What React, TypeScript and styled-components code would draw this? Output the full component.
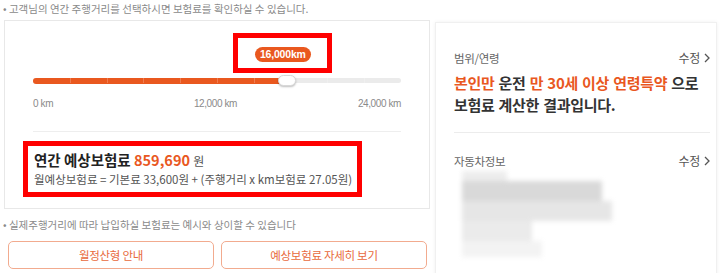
import React from "react";
import styled, { createGlobalStyle } from "styled-components";

const ORANGE = "#e9581f";
const FONT = `"Noto Sans CJK KR", "Noto Sans", sans-serif`;

const Global = createGlobalStyle`
  html, body { margin: 0; padding: 0; background: #fff; }
  body { font-family: ${FONT}; color: #333; }
  * { box-sizing: border-box; }
`;

const Page = styled.div`
  width: 720px;
  height: 273px;
  overflow: hidden;
  display: flex;
  align-items: flex-start;
`;

const LeftCol = styled.div`
  width: 432px;
  flex: none;
  display: flex;
  flex-direction: column;
`;

const Note = styled.p<{ $top?: number }>`
  margin: 0;
  padding: ${(p) => p.$top ?? 0}px 0 0 3px;
  font-size: 10.5px;
  line-height: 14px;
  color: #8a8a8a;
  white-space: nowrap;
  letter-spacing: 0;
`;

const Card = styled.div`
  margin: 4px 0 0 4px;
  width: 426px;
  height: 189px;
  border: 1px solid #e8e8e8;
  padding: 0 28px 0 28px;
  display: flex;
  flex-direction: column;
`;

const SliderBox = styled.div`
  position: relative;
  height: 110px;
  padding-top: 57px;
`;

const Track = styled.div`
  position: relative;
  height: 5px;
  border-radius: 3px;
  background: #ebebeb;
`;

const Fill = styled.div`
  position: absolute;
  left: 0;
  top: -0.5px;
  height: 6px;
  border-radius: 3px;
  background: ${ORANGE};
`;

const Tick = styled.span`
  position: absolute;
  top: 0;
  width: 1px;
  height: 5px;
  background: rgba(255, 255, 255, 0.22);
`;

const Thumb = styled.div`
  position: absolute;
  top: -3px;
  width: 18px;
  height: 11px;
  border-radius: 6px;
  background: #fff;
  border: 1px solid #d8d8d8;
  box-shadow: 0 1px 2px rgba(0, 0, 0, 0.25);
`;

const Annot = styled.div`
  position: absolute;
  top: 12px;
  width: 99px;
  height: 40px;
  border: 5px solid #f00;
  display: flex;
  align-items: center;
  justify-content: center;
  padding-top: 3px;
`;

const Badge = styled.span`
  background: ${ORANGE};
  color: #fff;
  font-family: "Liberation Sans", Arial, sans-serif;
  font-weight: 700;
  font-size: 10.5px;
  line-height: 15px;
  padding: 0 5px;
  border-radius: 8px;
  letter-spacing: -0.2px;
`;

const Labels = styled.div`
  display: flex;
  justify-content: space-between;
  margin-top: 15px;
  font-family: "Liberation Sans", Arial, sans-serif;
  font-size: 10px;
  line-height: 12px;
  color: #8a8a8a;
  letter-spacing: -0.4px;
`;

const Label = styled.span<{ $shift?: number }>`
  margin-left: ${(p) => p.$shift ?? 0}px;
`;

const Divider = styled.div`
  height: 1px;
  background: #eeeeee;
`;

const ResultBox = styled.div`
  margin: 9px 0 0 -10px;
  width: 339px;
  height: 56px;
  border: 5px solid #f00;
  padding: 4px 0 0 6px;
  display: flex;
  flex-direction: column;
`;

const Annual = styled.div`
  font-size: 14.5px;
  line-height: 20px;
  font-weight: 700;
  color: #222;
  letter-spacing: 0;
  white-space: nowrap;
`;

const Amount = styled.span`
  color: ${ORANGE};
`;

const Won = styled.span`
  font-weight: 400;
  font-size: 12px;
  color: #555;
`;

const Formula = styled.div`
  font-size: 11.5px;
  line-height: 16px;
  color: #555;
  letter-spacing: 0;
  white-space: nowrap;
`;

const BtnRow = styled.div`
  display: flex;
  gap: 7px;
  margin: 9px 0 0 8px;
`;

const Btn = styled.button`
  width: 206px;
  height: 28px;
  border: 1px solid #f2ab8f;
  border-radius: 5px;
  background: #fff;
  color: #e86a3c;
  font-family: ${FONT};
  font-size: 11.5px;
  letter-spacing: -0.3px;
  padding: 0;
`;

const RightPanel = styled.div`
  margin: 22px 0 0 3px;
  width: 282px;
  height: 260px;
  border: 1px solid #f0f0f0;
  box-shadow: 0 0 4px rgba(0, 0, 0, 0.06);
  padding: 27px 6px 0 18px;
  display: flex;
  flex-direction: column;
`;

const Section = styled.div`
  display: flex;
  flex-direction: column;
`;

const Head = styled.div`
  display: flex;
  justify-content: space-between;
  align-items: center;
  font-size: 11.5px;
  line-height: 16px;
  color: #666;
  letter-spacing: -0.3px;
`;

const Edit = styled.span`
  display: flex;
  align-items: center;
  gap: 4px;
  color: #555;
  font-size: 12px;
`;

const Summary = styled.div`
  margin-top: 6px;
  font-size: 15px;
  line-height: 22px;
  font-weight: 700;
  color: #333;
  letter-spacing: -0.3px;
  word-spacing: 1px;
`;

const Hl = styled.span`
  color: ${ORANGE};
`;

const Sep = styled.div`
  margin: 16px 0 0 0;
  height: 1px;
  background: #ececec;
`;

const Blurred = styled.div`
  margin: 2px 0 0 8px;
  display: flex;
  flex-direction: column;
  filter: blur(2.5px);
`;

const Blob = styled.div<{ $w: number; $h: number; $c: string; $ml?: number }>`
  width: ${(p) => p.$w}px;
  height: ${(p) => p.$h}px;
  background: ${(p) => p.$c};
  margin-left: ${(p) => p.$ml ?? 0}px;
`;

const Chev = () => (
  <svg width="6" height="10" viewBox="0 0 6 10">
    <path d="M1 1l4 4-4 4" fill="none" stroke="#555" strokeWidth="1.3" />
  </svg>
);

export default function App() {
  const value = 16000;
  const max = 24000;
  const pct = (value / max) * 100;
  const ticks = Array.from({ length: 9 }, (_, i) => (i + 1) * 10);
  return (
    <>
      <Global />
      <Page>
        <LeftCol>
          <Note $top={2}>• 고객님의 연간 주행거리를 선택하시면 보험료를 확인하실 수 있습니다.</Note>
          <Card>
            <SliderBox>
              <Annot style={{ left: `calc(${pct}% - 45px)` }}>
                <Badge>16,000km</Badge>
              </Annot>
              <Track>
                <Fill style={{ width: `${pct + 1}%` }} />
                {ticks.map((t) => (
                  <Tick key={t} style={{ left: `${t}%` }} />
                ))}
                <Thumb style={{ left: `${pct}%` }} />
              </Track>
              <Labels>
                <Label>0 km</Label>
                <Label $shift={20}>12,000 km</Label>
                <Label>24,000 km</Label>
              </Labels>
            </SliderBox>
            <Divider />
            <ResultBox>
              <Annual>
                연간 예상보험료 <Amount>859,690</Amount> <Won>원</Won>
              </Annual>
              <Formula>월예상보험료 = 기본료 33,600원 + (주행거리 x km보험료 27.05원)</Formula>
            </ResultBox>
          </Card>
          <Note $top={9}>• 실제주행거리에 따라 납입하실 보험료는 예시와 상이할 수 있습니다</Note>
          <BtnRow>
            <Btn>월정산형 안내</Btn>
            <Btn>예상보험료 자세히 보기</Btn>
          </BtnRow>
        </LeftCol>
        <RightPanel>
          <Section>
            <Head>
              <span>범위/연령</span>
              <Edit>
                수정 <Chev />
              </Edit>
            </Head>
            <Summary>
              <Hl>본인만</Hl> 운전 <Hl>만 30세 이상 연령특약</Hl> 으로
              <br />
              보험료 계산한 결과입니다.
            </Summary>
          </Section>
          <Sep />
          <Section style={{ marginTop: 20 }}>
            <Head>
              <span>자동차정보</span>
              <Edit>
                수정 <Chev />
              </Edit>
            </Head>
            <Blurred>
              <Blob $w={45} $h={10} $c="#ededed" />
              <Blob $w={140} $h={20} $c="#d9d9d9" />
              <Blob $w={150} $h={20} $c="#e6e6e6" />
              <Blob $w={70} $h={20} $c="#ebebeb" />
              <Blob $w={80} $h={16} $c="#f3f3f3" />
            </Blurred>
          </Section>
        </RightPanel>
      </Page>
    </>
  );
}
